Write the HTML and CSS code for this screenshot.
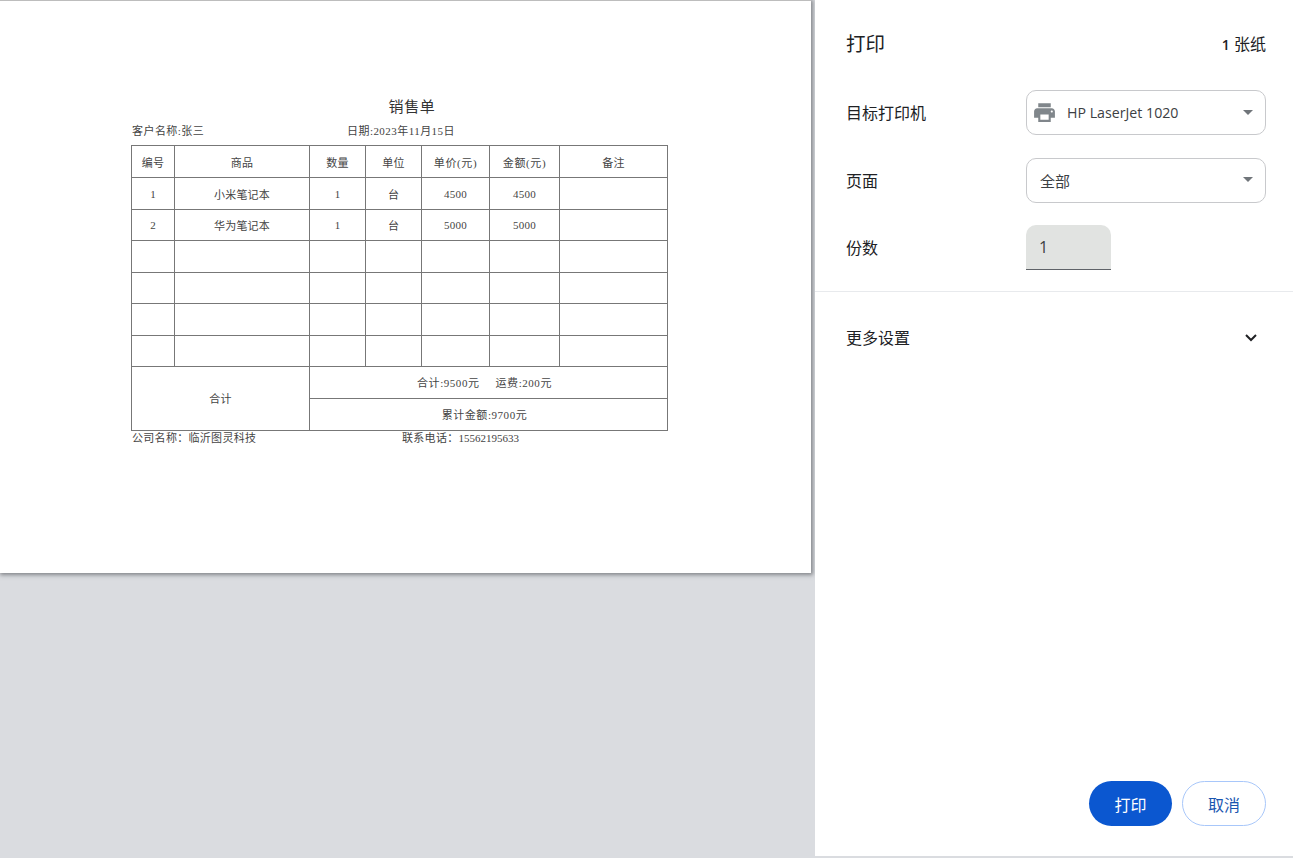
FILE: index.html
```html
<!DOCTYPE html>
<html lang="zh-CN">
<head>
  <meta charset="UTF-8">
  <meta name="viewport" content="width=device-width, initial-scale=1.0">
  <title>打印</title>
  <link rel="stylesheet" href="styles.css">
</head>
<body>
  <div class="preview">
    <div class="paper">
      <h1 class="doc-title">销售单</h1>
      <div class="doc-meta">
        <span class="meta-customer">客户名称:张三</span>
        <span>日期:2023年11月15日</span>
      </div>
      <table class="sale-table">
        <colgroup>
          <col class="c1"><col class="c2"><col class="c3"><col class="c4"><col class="c5"><col class="c6"><col class="c7">
        </colgroup>
        <tr class="tall"><td>编号</td><td>商品</td><td>数量</td><td>单位</td><td class="wide">单价(元)</td><td class="wide">金额(元)</td><td>备注</td></tr>
        <tr class="tall"><td>1</td><td>小米笔记本</td><td>1</td><td>台</td><td>4500</td><td>4500</td><td></td></tr>
        <tr><td>2</td><td>华为笔记本</td><td>1</td><td>台</td><td>5000</td><td>5000</td><td></td></tr>
        <tr class="tall"><td></td><td></td><td></td><td></td><td></td><td></td><td></td></tr>
        <tr><td></td><td></td><td></td><td></td><td></td><td></td><td></td></tr>
        <tr class="tall"><td></td><td></td><td></td><td></td><td></td><td></td><td></td></tr>
        <tr><td></td><td></td><td></td><td></td><td></td><td></td><td></td></tr>
        <tr class="tall"><td colspan="2" rowspan="2" class="total">合计</td><td colspan="5" class="sum">合计:9500元<span class="freight">运费:200元</span></td></tr>
        <tr class="tall"><td colspan="5" class="sum">累计金额:9700元</td></tr>
      </table>
      <div class="doc-foot">
        <span class="foot-company">公司名称：临沂图灵科技</span>
        <span>联系电话：<span class="phone">15562195633</span></span>
      </div>
    </div>
  </div>

  <div class="sidebar">
    <div class="side-head">
      <h2 class="side-title">打印</h2>
      <span class="sheets"><b>1</b> 张纸</span>
    </div>

    <div class="setting">
      <label class="setting-label">目标打印机</label>
      <div class="select">
        <svg class="printer-icon" viewBox="0 0 24 24" width="25" height="25">
          <path fill="#80868b" d="M19 8H5c-1.66 0-3 1.34-3 3v6h4v4h12v-4h4v-6c0-1.66-1.34-3-3-3zm-3 11H8v-5h8v5zm3-7c-.55 0-1-.45-1-1s.45-1 1-1 1 .45 1 1-.45 1-1 1zm-1-9H6v4h12V3z"/>
        </svg>
        <span class="select-text printer-name">HP LaserJet 1020</span>
        <span class="caret"></span>
      </div>
    </div>

    <div class="setting">
      <label class="setting-label">页面</label>
      <div class="select">
        <span class="select-text">全部</span>
        <span class="caret"></span>
      </div>
    </div>

    <div class="setting">
      <label class="setting-label">份数</label>
      <div class="copies">1</div>
    </div>

    <div class="more">
      <span class="more-label">更多设置</span>
      <svg class="chevron" viewBox="0 0 14 10" width="14" height="10">
        <path d="M2 2l5 5 5-5" fill="none" stroke="#202124" stroke-width="2"/>
      </svg>
    </div>

    <div class="actions">
      <button class="btn btn-print">打印</button>
      <button class="btn btn-cancel">取消</button>
    </div>
  </div>
</body>
</html>
```

FILE: styles.css
```css
* {
  box-sizing: border-box;
}
html, body {
  height: 100%;
}
body {
  margin: 0;
  background: #dadce0;
  display: flex;
  height: 858px;
  overflow: hidden;
  font-family: "Open Sans", "Noto Sans CJK SC", sans-serif;
  color: #202124;
}
.preview {
  width: 815px;
  flex: none;
}
.paper {
  width: 811px;
  height: 573px;
  background: #fff;
  border-top: 1px solid #bdbdbd;
  box-shadow: 1px 1px 4px 1px rgba(60, 64, 67, 0.55);
  padding: 96px 0 0 131px;
  font-family: "Liberation Serif", "Noto Sans CJK SC", serif;
  color: #444;
}
.doc-title {
  margin: 0;
  width: 562px;
  text-align: center;
  font-size: 15px;
  font-weight: 400;
  line-height: 20px;
  letter-spacing: 0.6px;
  color: #333;
}
.doc-meta {
  display: flex;
  height: 28px;
  padding: 7px 0 0 1px;
  font-size: 11px;
  line-height: 14px;
  letter-spacing: 0.45px;
}
.meta-customer {
  width: 215px;
}
.sale-table {
  border-collapse: collapse;
  table-layout: fixed;
  width: 536px;
  font-size: 11px;
}
.sale-table td {
  border: 1px solid #777;
  height: 31px;
  padding: 0;
  text-align: center;
  letter-spacing: 0.2px;
}
.sale-table .tall td {
  height: 32px;
}
.sale-table td.wide {
  letter-spacing: 0.6px;
}
.sale-table td.total {
  padding-bottom: 2px;
}
.sale-table td.sum {
  padding: 0 8px 2px 0;
  letter-spacing: 0.55px;
}
.c1 { width: 43px; }
.c2 { width: 135px; }
.c3 { width: 56px; }
.c4 { width: 56px; }
.c5 { width: 68px; }
.c6 { width: 70px; }
.c7 { width: 108px; }
.freight {
  margin-left: 16px;
}
.doc-foot {
  display: flex;
  padding-left: 1px;
  font-size: 11px;
  line-height: 14px;
  letter-spacing: 0.3px;
}
.foot-company {
  width: 270px;
}
.phone {
  letter-spacing: 0;
}
.sidebar {
  width: 478px;
  height: 856px;
  flex: none;
  background: #fff;
  display: flex;
  flex-direction: column;
}
.side-head {
  display: flex;
  justify-content: space-between;
  align-items: center;
  height: 90px;
  padding: 0 27px 5px 31px;
}
.side-title {
  margin: 0;
  font-size: 19.5px;
  font-weight: 400;
}
.sheets {
  font-size: 16px;
}
.sheets b {
  font-size: 14px;
  font-weight: 600;
}
.setting {
  display: flex;
  align-items: center;
  height: 45px;
  margin-bottom: 22.6px;
  padding-left: 31px;
}
.setting-label {
  width: 180px;
  padding-bottom: 1px;
  font-size: 16px;
}
.select {
  display: flex;
  align-items: center;
  width: 240px;
  height: 45px;
  border: 1px solid #c8c9cc;
  border-radius: 10px;
  padding: 0 12px 0 5px;
  font-size: 15px;
}
.printer-icon {
  margin-right: 10px;
}
.select-text {
  flex: 1;
  padding-left: 8px;
  color: #3c4043;
}
.select-text.printer-name {
  padding-left: 0;
  font-size: 14.2px;
}
.caret {
  width: 0;
  height: 0;
  border-left: 5px solid transparent;
  border-right: 5px solid transparent;
  border-top: 5px solid #70757a;
  margin-bottom: 1px;
}
.copies {
  width: 85px;
  height: 45px;
  background: #e1e3e1;
  border-bottom: 1px solid #5f6368;
  border-radius: 10px 10px 0 0;
  padding-left: 13px;
  font-size: 16px;
  line-height: 45px;
  color: #3c4043;
}
.more {
  display: flex;
  justify-content: space-between;
  align-items: center;
  height: 93px;
  margin-top: -2px;
  border-top: 1px solid #e8eaed;
  padding: 0 35px 0 31px;
  font-size: 16px;
}
.more-label {
  margin-bottom: 2px;
}
.chevron {
  margin-top: 1px;
}
.actions {
  display: flex;
  justify-content: flex-end;
  gap: 10px;
  margin-top: auto;
  padding: 0 27px 30px 0;
}
.btn {
  height: 45px;
  border-radius: 23px;
  font-family: inherit;
  font-size: 16px;
  padding: 0;
}
.btn-print {
  width: 83px;
  background: #0b57d0;
  border: none;
  color: #fff;
}
.btn-cancel {
  width: 84px;
  background: #fff;
  border: 1px solid #a8c7fa;
  color: #1a56b0;
}
```
